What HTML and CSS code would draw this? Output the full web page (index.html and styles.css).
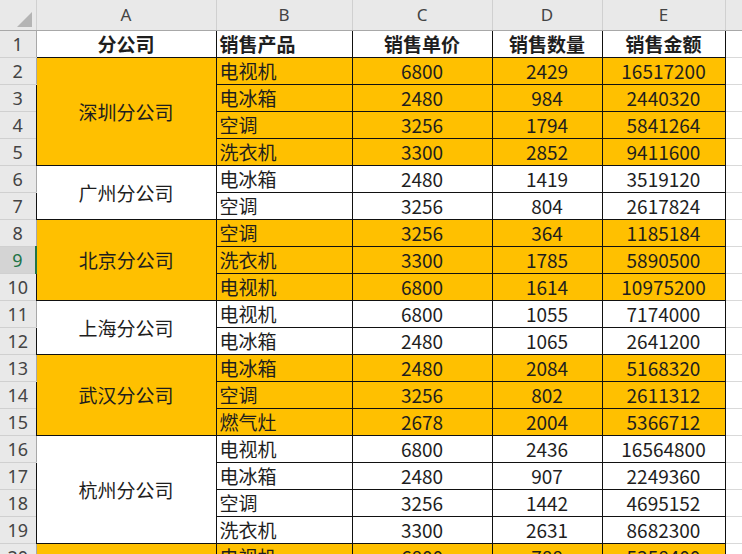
FILE: index.html
```html
<!DOCTYPE html>
<html lang="zh">
<head>
<meta charset="utf-8">
<link rel="stylesheet" href="styles.css">
</head>
<body>
<table class="sheet">
  <colgroup>
    <col class="c-rh"><col class="c-a"><col class="c-b"><col class="c-c"><col class="c-d"><col class="c-e"><col class="c-f">
  </colgroup>
  <thead>
    <tr class="colhead">
      <th class="corner"><svg width="36" height="30" viewBox="0 0 36 30"><polygon points="32,12 32,27 17,27" fill="#b4b4b4"/></svg></th>
      <th>A</th><th>B</th><th>C</th><th>D</th><th>E</th><th class="fcol"></th>
    </tr>
  </thead>
  <tbody>
    <tr class="title"><th class="rh">1</th><td>分公司</td><td class="prod">销售产品</td><td>销售单价</td><td>销售数量</td><td>销售金额</td><td class="f"></td></tr>

    <tr class="org"><th class="rh">2</th><td class="co" rowspan="4">深圳分公司</td><td class="prod">电视机</td><td>6800</td><td>2429</td><td>16517200</td><td class="f"></td></tr>
    <tr class="org"><th class="rh">3</th><td class="prod">电冰箱</td><td>2480</td><td>984</td><td>2440320</td><td class="f"></td></tr>
    <tr class="org"><th class="rh">4</th><td class="prod">空调</td><td>3256</td><td>1794</td><td>5841264</td><td class="f"></td></tr>
    <tr class="org"><th class="rh">5</th><td class="prod">洗衣机</td><td>3300</td><td>2852</td><td>9411600</td><td class="f"></td></tr>

    <tr class="wht"><th class="rh">6</th><td class="co" rowspan="2">广州分公司</td><td class="prod">电冰箱</td><td>2480</td><td>1419</td><td>3519120</td><td class="f"></td></tr>
    <tr class="wht"><th class="rh">7</th><td class="prod">空调</td><td>3256</td><td>804</td><td>2617824</td><td class="f"></td></tr>

    <tr class="org"><th class="rh">8</th><td class="co" rowspan="3">北京分公司</td><td class="prod">空调</td><td>3256</td><td>364</td><td>1185184</td><td class="f"></td></tr>
    <tr class="org"><th class="rh sel">9</th><td class="prod">洗衣机</td><td>3300</td><td>1785</td><td>5890500</td><td class="f"></td></tr>
    <tr class="org"><th class="rh">10</th><td class="prod">电视机</td><td>6800</td><td>1614</td><td>10975200</td><td class="f"></td></tr>

    <tr class="wht"><th class="rh">11</th><td class="co" rowspan="2">上海分公司</td><td class="prod">电视机</td><td>6800</td><td>1055</td><td>7174000</td><td class="f"></td></tr>
    <tr class="wht"><th class="rh">12</th><td class="prod">电冰箱</td><td>2480</td><td>1065</td><td>2641200</td><td class="f"></td></tr>

    <tr class="org"><th class="rh">13</th><td class="co" rowspan="3">武汉分公司</td><td class="prod">电冰箱</td><td>2480</td><td>2084</td><td>5168320</td><td class="f"></td></tr>
    <tr class="org"><th class="rh">14</th><td class="prod">空调</td><td>3256</td><td>802</td><td>2611312</td><td class="f"></td></tr>
    <tr class="org"><th class="rh">15</th><td class="prod">燃气灶</td><td>2678</td><td>2004</td><td>5366712</td><td class="f"></td></tr>

    <tr class="wht"><th class="rh">16</th><td class="co" rowspan="4">杭州分公司</td><td class="prod">电视机</td><td>6800</td><td>2436</td><td>16564800</td><td class="f"></td></tr>
    <tr class="wht"><th class="rh">17</th><td class="prod">电冰箱</td><td>2480</td><td>907</td><td>2249360</td><td class="f"></td></tr>
    <tr class="wht"><th class="rh">18</th><td class="prod">空调</td><td>3256</td><td>1442</td><td>4695152</td><td class="f"></td></tr>
    <tr class="wht"><th class="rh">19</th><td class="prod">洗衣机</td><td>3300</td><td>2631</td><td>8682300</td><td class="f"></td></tr>

    <tr class="org"><th class="rh">20</th><td class="co"></td><td class="prod">电视机</td><td>6800</td><td>788</td><td>5358400</td><td class="f"></td></tr>
  </tbody>
</table>
</body>
</html>
```

FILE: styles.css
```css
html, body {
  margin: 0;
  padding: 0;
  background: #ffffff;
  overflow: hidden;
  width: 742px;
  height: 554px;
}

.sheet {
  border-collapse: collapse;
  table-layout: fixed;
  width: 765px;
  font-family: "Noto Sans CJK SC", "Noto Sans", sans-serif;
  font-size: 19px;
  color: #1e1e1e;
}

.c-rh { width: 36px; }
.c-a { width: 180px; }
.c-b { width: 136px; }
.c-c { width: 140px; }
.c-d { width: 110px; }
.c-e { width: 123px; }
.c-f { width: 40px; }

.colhead th {
  height: 30px;
  padding: 0;
  background: #e9e9e9;
  color: #444444;
  font-weight: 400;
  font-size: 17px;
  line-height: 18px;
  border-right: 1px solid #d0d0d0;
  border-bottom: 1px solid #a8a8a8;
  vertical-align: middle;
  font-family: "Noto Sans", "DejaVu Sans", sans-serif;
}

.colhead th.corner {
  position: relative;
  background: #e9e9e9;
}

.corner svg {
  position: absolute;
  left: 0;
  top: 0;
}

tbody tr {
  height: 27px;
}

tbody td {
  padding: 0;
  line-height: 20px;
  text-align: center;
  vertical-align: middle;
  border: 1px solid #111111;
  white-space: nowrap;
  overflow: hidden;
}

tbody td.prod {
  text-align: left;
  padding-left: 3px;
}

th.rh {
  padding: 0;
  background: #e9e9e9;
  color: #444444;
  font-weight: 400;
  font-size: 18px;
  line-height: 20px;
  text-align: center;
  border-right: 1px solid #a8a8a8;
  border-bottom: 1px solid #d0d0d0;
  font-family: "Noto Sans", "DejaVu Sans", sans-serif;
}

th.rh.sel {
  background: #d4d4d4;
  color: #217346;
  border-right: 2px solid #217346;
}

tr.title td {
  font-weight: 700;
  background: #ffffff;
}

tr.org td {
  background: #ffc000;
}

tr.wht td {
  background: #ffffff;
}

tbody tr td.f {
  border: 1px solid #d9d9d9;
  border-left: 1px solid #111111;
  background: #ffffff;
}
```
